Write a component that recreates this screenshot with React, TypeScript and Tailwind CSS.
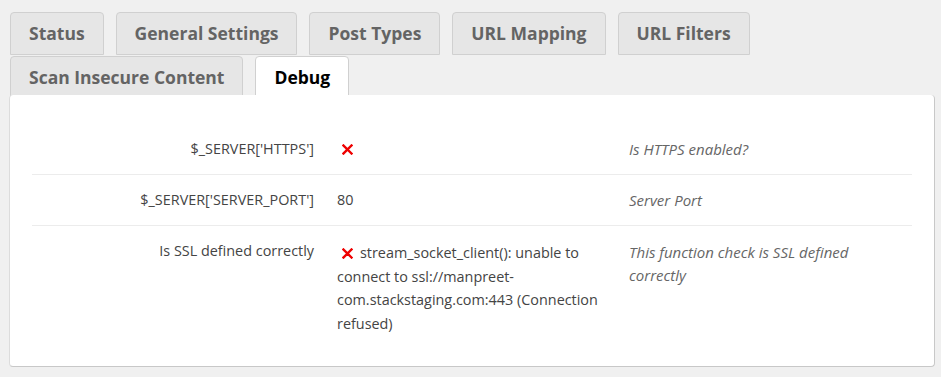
const tabsRow = ["Status", "General Settings", "Post Types", "URL Mapping", "URL Filters", "Scan Insecure Content"];

function RedX() {
  return (
    <svg width="11" height="11" viewBox="0 0 11 11" className="inline-block ml-[5px] mr-[7px] align-[-1px]">
      <path d="M1.5 1.5 L9.5 9.5 M9.5 1.5 L1.5 9.5" stroke="#ee0000" strokeWidth="2.4" strokeLinecap="square" />
    </svg>
  );
}

export default function App() {
  return (
    <div className="min-h-screen bg-[#f0f0f0] pt-3 font-['Open_Sans','Liberation_Sans',sans-serif]">
      {/* Tabs */}
      <div className="flex flex-wrap gap-x-3 gap-y-px pl-[10px] pr-4">
        {tabsRow.map((t) => (
          <div
            key={t}
            className="h-[43px] px-[18px] flex items-center border border-[#d0d0d0] rounded-t-[4px] bg-[#e6e6e6] text-[#646464] text-[17.5px] font-bold"
          >
            {t}
          </div>
        ))}
        <div className="h-[43px] px-[18px] flex items-center border border-[#d0d0d0] rounded-t-[4px] bg-white text-black text-[17.5px] font-bold">
          Debug
        </div>
      </div>

      {/* Panel */}
      <div className="relative -mt-1 mx-[9px] mr-[6px] bg-white rounded-[4px] border-l border-l-[#dcdcdc] border-r border-r-[#c8c8c8] border-b border-b-[#c8c8c8] pt-[29px] pb-4 px-[22px] text-[14.4px] text-[#444]">
        <div className="grid grid-cols-[292px_295px_1fr]">
          <div className="py-[15px] pr-[10px] text-right leading-5 border-b border-[#ececec]">$_SERVER['HTTPS']</div>
          <div className="py-[15px] pl-[13px] leading-5 border-b border-[#ececec]">
            <RedX />
          </div>
          <div className="py-[15px] pl-[10px] leading-5 italic text-[15px] text-[#666] border-b border-[#ececec]">Is HTTPS enabled?</div>

          <div className="py-[15px] pr-[10px] text-right leading-5 border-b border-[#ececec]">$_SERVER['SERVER_PORT']</div>
          <div className="py-[15px] pl-[13px] leading-5 border-b border-[#ececec]">80</div>
          <div className="py-[15px] pl-[10px] leading-5 italic text-[15px] text-[#666] border-b border-[#ececec]">Server Port</div>

          <div className="py-[15px] pr-[10px] text-right leading-5">Is SSL defined correctly</div>
          <div className="pt-[15px] pb-[15px] pl-[13px] pr-[10px] leading-[23.5px]">
            <RedX />
            stream_socket_client(): unable to connect to ssl://manpreet-com.stackstaging.com:443 (Connection refused)
          </div>
          <div className="pt-[15px] pl-[10px] pr-8 leading-[23px] italic text-[15px] text-[#666]">This function check is SSL defined correctly</div>
        </div>
      </div>
    </div>
  );
}
